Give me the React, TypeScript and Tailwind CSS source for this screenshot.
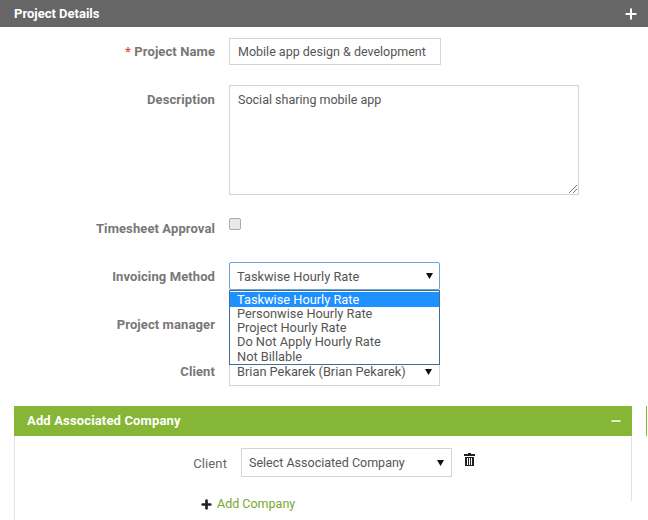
import { Plus, Minus } from 'lucide-react';

const labelClass = 'w-[215px] shrink-0 text-right text-[13px] font-bold text-[#777777] tracking-[0.1px]';
const options = ['Taskwise Hourly Rate', 'Personwise Hourly Rate', 'Project Hourly Rate', 'Do Not Apply Hourly Rate', 'Not Billable'];

function Caret() {
    return (
        <svg width="7" height="7" viewBox="0 0 7 7" className="shrink-0">
            <path d="M0 1h7L3.5 7z" fill="#111" />
        </svg>
    );
}

function TrashIcon() {
    return (
        <svg width="11" height="13" viewBox="0 0 11 13" className="shrink-0">
            <path d="M4 0h3v1h4v2H0V1h4z" fill="#222" />
            <path d="M1 4h9v9H1zM3 5v7h1V5zM5 5v7h1V5zM7 5v7h1V5z" fill="#222" fillRule="evenodd" />
        </svg>
    );
}

export default function App() {
    return (
        <div className="w-[648px] h-[520px] overflow-hidden bg-white font-['Roboto','Liberation_Sans',sans-serif] text-[12.5px] text-[#555]">
            <div className="h-[27px] bg-[#666666] flex items-center justify-between pl-[14px] pr-[9px]">
                <span className="text-[13px] font-bold text-white">Project Details</span>
                <Plus size={16} strokeWidth={3} className="text-white" />
            </div>

            <div className="flex items-start gap-[14px] mt-[11px]">
                <label className={labelClass + ' pt-[4px]'}><span className="text-[#d9534f]">*</span> Project Name</label>
                <div className="w-[212px] h-[27px] border border-[#d4d4d4] flex items-center pl-[8px] pt-[1px]">Mobile app design &amp; development</div>
            </div>

            <div className="flex items-start gap-[14px] mt-[20px]">
                <label className={labelClass + ' pt-[5px]'}>Description</label>
                <div className="w-[350px] h-[110px] border border-[#d4d4d4] pl-[8px] pt-[5px] relative">
                    Social sharing mobile app
                    <svg width="8" height="8" viewBox="0 0 8 8" className="absolute right-[1px] bottom-[1px]">
                        <path d="M8 0L0 8M8 4L4 8" stroke="#777" strokeWidth="1" />
                    </svg>
                </div>
            </div>

            <div className="flex items-start gap-[14px] mt-[23px]">
                <label className={labelClass + ' pt-[1px]'}>Timesheet Approval</label>
                <div className="w-[12px] h-[12px] rounded-[2px] border border-[#a9a9a9] bg-[#e9e9e9]" />
            </div>

            <div className="flex items-start gap-[14px] mt-[23px] relative">
                <label className={labelClass + ' pt-[5px]'}>Invoicing Method</label>
                <div className="w-[211px] h-[28px] border border-[#6aa5e0] rounded-[2px] flex items-center justify-between pl-[7px] pr-[6px] relative text-[12.8px]">
                    <span className="pt-[3px]">Taskwise Hourly Rate</span>
                    <Caret />
                    <ul className="absolute left-[-1px] top-[27px] w-[211px] h-[75px] border border-[#3f6f96] bg-white z-10 leading-[14.3px] pt-[1px]">
                        {options.map((o, i) => (
                            <li key={o} className={i === 0 ? 'bg-[#1e90ff] text-white pl-[7px] pt-[1px]' : 'pl-[7px]'}>{o}</li>
                        ))}
                    </ul>
                </div>
            </div>

            <div className="flex items-start gap-[14px] mt-[25px]">
                <label className={labelClass}>Project manager</label>
            </div>

            <div className="flex items-start gap-[14px] mt-[27px]">
                <label className={labelClass + ' pt-[1px]'}>Client</label>
                <div className="w-[211px] h-[26px] -mt-[1px] border-b border-x border-[#d4d4d4] flex justify-between pl-[7px] pr-[7px] pt-[2px] text-[12.8px]">
                    <span>Brian Pekarek (Brian Pekarek)</span>
                    <span className="pt-[6px]"><Caret /></span>
                </div>
            </div>

            <div className="flex mt-[20px] pl-[14px]">
                <div className="w-[618px] h-[114px] border-l border-[#e3e3e3]">
                    <div className="h-[95px] border-r border-[#e3e3e3]">
                        <div className="h-[30px] -ml-px -mr-px bg-[#85b635] flex items-center justify-between pl-[13px] pr-[9px]">
                            <span className="text-[13px] font-bold text-white tracking-[0.15px]">Add Associated Company</span>
                            <Minus size={14} strokeWidth={2.5} className="text-white" />
                        </div>
                        <div className="flex items-start mt-[12px]">
                            <label className="w-[212px] shrink-0 text-right pt-[6px] text-[13px] text-[#666] tracking-[0.1px]">Client</label>
                            <div className="w-[211px] h-[29px] ml-[14px] border border-[#d4d4d4] flex items-center justify-between pl-[7px] pr-[7px]">
                                <span className="pt-[2px]">Select Associated Company</span>
                                <Caret />
                            </div>
                            <div className="pt-[5px] ml-[12px]"><TrashIcon /></div>
                        </div>
                        <div className="flex items-center gap-[4px] mt-[18px] pl-[185px]">
                            <Plus size={13} strokeWidth={5} className="text-[#222]" />
                            <span className="text-[#7aa82e]">Add Company</span>
                        </div>
                    </div>
                </div>
                <div className="w-px h-[30px] ml-[14px] bg-[#85b635]" />
            </div>
        </div>
    );
}
